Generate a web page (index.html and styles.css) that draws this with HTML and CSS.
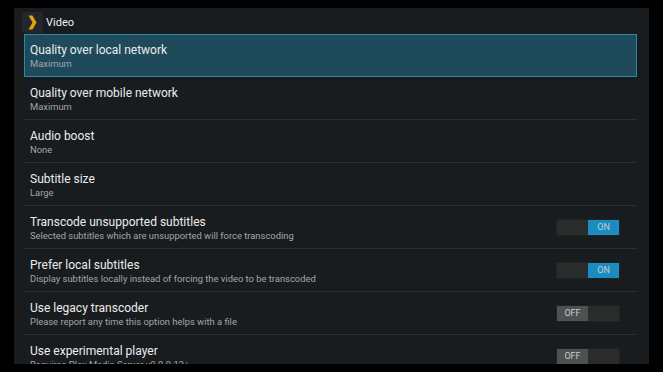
FILE: index.html
```html
<!DOCTYPE html>
<html lang="en">
<head>
    <meta charset="UTF-8">
    <title>Video Settings</title>
    <link rel="stylesheet" href="styles.css">
</head>
<body>
    <div class="panel">
        <div class="header">
            <div class="logo">
                <svg width="21" height="21" viewBox="0 0 21 21">
                    <path d="M6.5 3.5 L10.5 3.5 L14.5 10.5 L10.5 17.5 L6.5 17.5 L10.5 10.5 Z" fill="#e5a00d"/>
                </svg>
            </div>
            <span class="header-title">Video</span>
        </div>

        <ul class="prefs">
            <li class="pref selected">
                <div class="pref-text">
                    <div class="pref-title">Quality over local network</div>
                    <div class="pref-summary">Maximum</div>
                </div>
            </li>
            <li class="pref">
                <div class="pref-text">
                    <div class="pref-title">Quality over mobile network</div>
                    <div class="pref-summary">Maximum</div>
                </div>
            </li>
            <li class="pref">
                <div class="pref-text">
                    <div class="pref-title">Audio boost</div>
                    <div class="pref-summary">None</div>
                </div>
            </li>
            <li class="pref">
                <div class="pref-text">
                    <div class="pref-title">Subtitle size</div>
                    <div class="pref-summary">Large</div>
                </div>
            </li>
            <li class="pref">
                <div class="pref-text">
                    <div class="pref-title">Transcode unsupported subtitles</div>
                    <div class="pref-summary">Selected subtitles which are unsupported will force transcoding</div>
                </div>
                <div class="toggle on"><span class="toggle-off"></span><span class="toggle-on">ON</span></div>
            </li>
            <li class="pref">
                <div class="pref-text">
                    <div class="pref-title">Prefer local subtitles</div>
                    <div class="pref-summary">Display subtitles locally instead of forcing the video to be transcoded</div>
                </div>
                <div class="toggle on"><span class="toggle-off"></span><span class="toggle-on">ON</span></div>
            </li>
            <li class="pref">
                <div class="pref-text">
                    <div class="pref-title">Use legacy transcoder</div>
                    <div class="pref-summary">Please report any time this option helps with a file</div>
                </div>
                <div class="toggle off"><span class="toggle-off">OFF</span><span class="toggle-on"></span></div>
            </li>
            <li class="pref">
                <div class="pref-text">
                    <div class="pref-title">Use experimental player</div>
                    <div class="pref-summary">Requires Plex Media Server v0.9.9.13+</div>
                </div>
                <div class="toggle off"><span class="toggle-off">OFF</span><span class="toggle-on"></span></div>
            </li>
        </ul>
    </div>
</body>
</html>
```

FILE: styles.css
```css
* {
    margin: 0;
    padding: 0;
    box-sizing: border-box;
}

body {
    font-family: Roboto, 'Noto Sans', sans-serif;
    background: #000;
    color: #e6e6e6;
    width: 663px;
    height: 372px;
    overflow: hidden;
    padding: 8px 14px 0 14px;
}

.panel {
    background: #191c1f;
    height: 356px;
    overflow: hidden;
    padding: 0 12px 0 10px;
}

.header {
    display: flex;
    align-items: center;
    height: 26px;
    padding-top: 2px;
    margin-left: -2px;
}

.logo {
    width: 21px;
    height: 21px;
    background: #23262a;
    display: flex;
}

.header-title {
    font-size: 11px;
    margin-left: 3px;
    color: #eeeeee;
}

.prefs {
    list-style: none;
}

.pref {
    display: flex;
    align-items: center;
    height: 43px;
    padding: 0 17px 0 6px;
    border-bottom: 1px solid #2b2f33;
}

.pref.selected {
    background: #1f4a5b;
    border: 1px solid #2a8aa6;
    padding-left: 5px;
    height: 43px;
}

.pref-text {
    flex: 1;
    padding-top: 1px;
}

.pref-title {
    font-size: 12px;
    line-height: 16px;
    color: #ececec;
}

.pref-summary {
    font-size: 9.4px;
    line-height: 12px;
    color: #a3a6a8;
}

.toggle {
    display: flex;
    width: 64px;
    height: 17px;
    border: 1px solid #1f2224;
    background: #2a2c2c;
}

.toggle span {
    flex: 1;
    display: flex;
    align-items: center;
    justify-content: center;
    font-size: 9px;
    color: #c8cccd;
}

.toggle.on .toggle-on {
    background: #1a8cc0;
}

.toggle.off .toggle-off {
    background: #4e5151;
}
```
